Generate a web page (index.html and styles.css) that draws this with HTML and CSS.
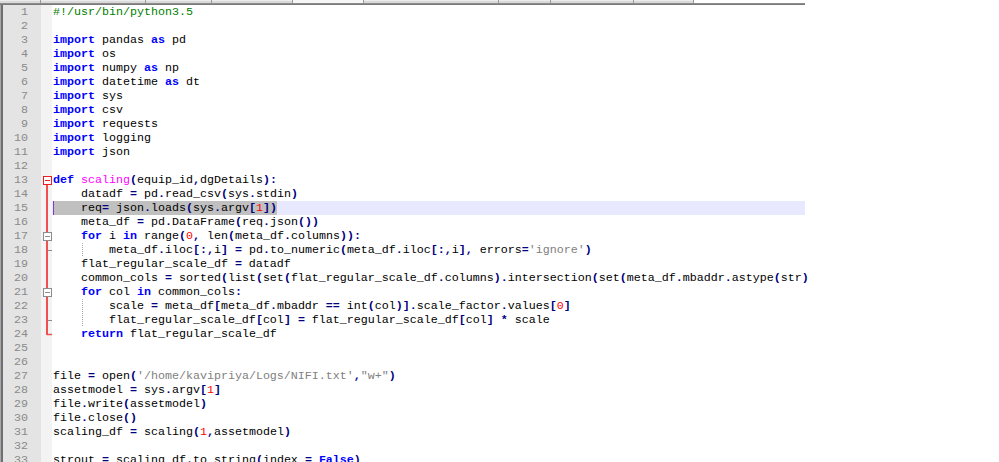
FILE: index.html
```html
<!DOCTYPE html>
<html>
<head>
<meta charset="utf-8">
<link rel="stylesheet" href="styles.css">
</head>
<body>
<div class="window">
  <div class="tabstrip">
    <div class="tab" style="width:41px"></div>
    <div class="tab" style="width:105px"></div>
    <div class="tab" style="width:66px"></div>
    <div class="tab" style="width:81px"></div>
    <div class="tab active" style="width:71px"></div>
    <div class="tab" style="width:135px"></div>
    <div class="tab" style="width:52px"></div>
    <div class="tab" style="width:83px"></div>
    <div class="tab" style="width:60px"></div>
  </div>
  <div class="rule"></div>
  <div class="editor">
    <div class="gutter">
      <div>1</div><div>2</div><div>3</div><div>4</div><div>5</div><div>6</div><div>7</div><div>8</div><div>9</div><div>10</div><div>11</div><div>12</div><div>13</div><div>14</div><div>15</div><div>16</div><div>17</div><div>18</div><div>19</div><div>20</div><div>21</div><div>22</div><div>23</div><div>24</div><div>25</div><div>26</div><div>27</div><div>28</div><div>29</div><div>30</div><div>31</div><div>32</div><div>33</div>
    </div>
    <svg class="fold" width="11" height="462" viewBox="0 0 11 462">
      <line x1="6" y1="180" x2="6" y2="330" stroke="#f05050" stroke-width="2"/>
      <line x1="6" y1="329.5" x2="11" y2="329.5" stroke="#f05050" stroke-width="1.5"/>
      <rect x="2.5" y="171.5" width="8" height="8" fill="#fff" stroke="#ee1c1c"/>
      <line x1="4" y1="175.5" x2="9" y2="175.5" stroke="#ee1c1c"/>
      <rect x="2.5" y="227.5" width="8" height="8" fill="#fff" stroke="#8c8c8c"/>
      <line x1="4" y1="231.5" x2="9" y2="231.5" stroke="#8c8c8c"/>
      <line x1="7" y1="245.5" x2="11" y2="245.5" stroke="#8c8c8c"/>
      <rect x="2.5" y="283.5" width="8" height="8" fill="#fff" stroke="#8c8c8c"/>
      <line x1="4" y1="287.5" x2="9" y2="287.5" stroke="#8c8c8c"/>
      <line x1="7" y1="315.5" x2="11" y2="315.5" stroke="#8c8c8c"/>
    </svg>
    <div class="code">
<div class="ln"><span class="c">#!/usr/bin/python3.5</span></div>
<div class="ln"></div>
<div class="ln"><span class="k">import</span> pandas <span class="k">as</span> pd</div>
<div class="ln"><span class="k">import</span> os</div>
<div class="ln"><span class="k">import</span> numpy <span class="k">as</span> np</div>
<div class="ln"><span class="k">import</span> datetime <span class="k">as</span> dt</div>
<div class="ln"><span class="k">import</span> sys</div>
<div class="ln"><span class="k">import</span> csv</div>
<div class="ln"><span class="k">import</span> requests</div>
<div class="ln"><span class="k">import</span> logging</div>
<div class="ln"><span class="k">import</span> json</div>
<div class="ln"></div>
<div class="ln"><span class="k">def</span> <span class="f">scaling</span><span class="o">(</span>equip_id<span class="o">,</span>dgDetails<span class="o">):</span></div>
<div class="ln">    datadf <span class="o">=</span> pd<span class="o">.</span>read_csv<span class="o">(</span>sys<span class="o">.</span>stdin<span class="o">)</span></div>
<div class="ln current"><span class="sel">    req<span class="o">=</span> json<span class="o">.</span>loads<span class="o">(</span>sys<span class="o">.</span>argv<span class="o">[</span><span class="n">1</span><span class="o">])</span></span></div>
<div class="ln">    meta_df <span class="o">=</span> pd<span class="o">.</span>DataFrame<span class="o">(</span>req<span class="o">.</span>json<span class="o">())</span></div>
<div class="ln">    <span class="k">for</span> i <span class="k">in</span> range<span class="o">(</span><span class="n">0</span><span class="o">,</span> len<span class="o">(</span>meta_df<span class="o">.</span>columns<span class="o">)):</span></div>
<div class="ln">    <span class="ig">    </span>meta_df<span class="o">.</span>iloc<span class="o">[:,</span>i<span class="o">]</span> <span class="o">=</span> pd<span class="o">.</span>to_numeric<span class="o">(</span>meta_df<span class="o">.</span>iloc<span class="o">[:,</span>i<span class="o">],</span> errors<span class="o">=</span><span class="s">'ignore'</span><span class="o">)</span></div>
<div class="ln">    flat_regular_scale_df <span class="o">=</span> datadf</div>
<div class="ln">    common_cols <span class="o">=</span> sorted<span class="o">(</span>list<span class="o">(</span>set<span class="o">(</span>flat_regular_scale_df<span class="o">.</span>columns<span class="o">).</span>intersection<span class="o">(</span>set<span class="o">(</span>meta_df<span class="o">.</span>mbaddr<span class="o">.</span>astype<span class="o">(</span>str<span class="o">)</span></div>
<div class="ln">    <span class="k">for</span> col <span class="k">in</span> common_cols<span class="o">:</span></div>
<div class="ln">    <span class="ig">    </span>scale <span class="o">=</span> meta_df<span class="o">[</span>meta_df<span class="o">.</span>mbaddr <span class="o">==</span> int<span class="o">(</span>col<span class="o">)].</span>scale_factor<span class="o">.</span>values<span class="o">[</span><span class="n">0</span><span class="o">]</span></div>
<div class="ln">    <span class="ig">    </span>flat_regular_scale_df<span class="o">[</span>col<span class="o">]</span> <span class="o">=</span> flat_regular_scale_df<span class="o">[</span>col<span class="o">]</span> <span class="o">*</span> scale</div>
<div class="ln">    <span class="k">return</span> flat_regular_scale_df</div>
<div class="ln"></div>
<div class="ln"></div>
<div class="ln">file <span class="o">=</span> open<span class="o">(</span><span class="s">'/home/kavipriya/Logs/NIFI.txt'</span><span class="o">,</span><span class="s">"w+"</span><span class="o">)</span></div>
<div class="ln">assetmodel <span class="o">=</span> sys<span class="o">.</span>argv<span class="o">[</span><span class="n">1</span><span class="o">]</span></div>
<div class="ln">file<span class="o">.</span>write<span class="o">(</span>assetmodel<span class="o">)</span></div>
<div class="ln">file<span class="o">.</span>close<span class="o">()</span></div>
<div class="ln">scaling_df <span class="o">=</span> scaling<span class="o">(</span><span class="n">1</span><span class="o">,</span>assetmodel<span class="o">)</span></div>
<div class="ln"></div>
<div class="ln">strout <span class="o">=</span> scaling_df<span class="o">.</span>to_string<span class="o">(</span>index <span class="o">=</span> <span class="k">False</span><span class="o">)</span></div>
    </div>
  </div>
</div>
</body>
</html>
```

FILE: styles.css
```css
html, body {
  margin: 0;
  padding: 0;
  background: #ffffff;
  overflow: hidden;
  height: 462px;
}

.window {
  width: 805px;
}

.tabstrip {
  display: flex;
  height: 3px;
  width: 805px;
  background: #ffffff;
}

.tab {
  flex: none;
  height: 3px;
  box-sizing: border-box;
  background: linear-gradient(to bottom, #ececec 0 1px, #dadada 1px 3px);
  border-right: 1px solid #9a9a9a;
}

.tab.active {
  background: #f6f6f6;
}

.rule {
  height: 2px;
  background: linear-gradient(to bottom, #8c8c8c 0 1px, #7a7a7a 1px 2px);
}

.editor {
  display: flex;
  align-items: flex-start;
  border-left: 1px solid #a9a9a9;
}

.gutter {
  flex: none;
  box-sizing: border-box;
  border-left: 2px solid #6f6f6f;
  width: 40px;
  padding-right: 13px;
  background: #e4e4e4;
  color: #8a8a8a;
  font-family: "Liberation Mono", monospace;
  font-size: 11.667px;
  line-height: 14px;
  text-align: right;
}

.gutter div {
  height: 14px;
}

.fold {
  display: block;
  flex: none;
  background: #f3f3f3;
}

.code {
  flex: 1;
  min-width: 0;
  font-family: "Liberation Mono", monospace;
  font-size: 11.667px;
  line-height: 14px;
  color: #000000;
}

.ln {
  height: 14px;
  white-space: pre;
  padding-left: 1px;
}

.ln.current {
  background: #e8e8ff;
}

.sel {
  display: inline-block;
  height: 14px;
  vertical-align: top;
  background: #c0c0c0;
  box-shadow: inset 1px 0 #7d36d8;
}

.ig {
  display: inline-block;
  height: 14px;
  vertical-align: top;
  background: repeating-linear-gradient(to bottom, #a8a8a8 0 1px, transparent 1px 2px) 1px 0 / 1px 100% no-repeat;
}

.k { color: #0000ff; font-weight: bold; }
.o { color: #000080; font-weight: bold; }
.n { color: #ff0000; }
.s { color: #808080; }
.c { color: #008000; }
.f { color: #ff00ff; }
```
